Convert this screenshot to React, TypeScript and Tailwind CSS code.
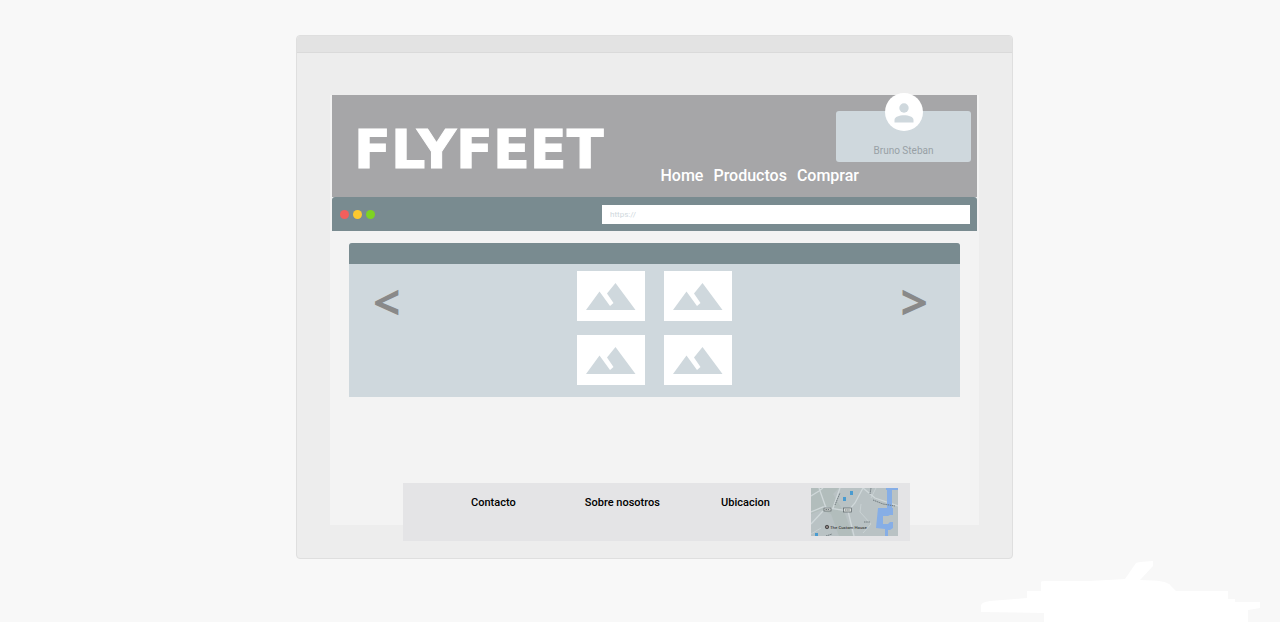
import React from "react";

function MountainIcon() {
  return (
    <svg viewBox="0 0 68 50" className="h-[50px] w-[68px]" fill="#cfd8dd" aria-hidden="true">
      <path d="M9 39 22.500 20.500 33 35 36.500 32 30 22.500 38.500 12 58.500 39Z" />
    </svg>
  );
}

function Picture() {
  return (
    <div className="bg-white">
      <MountainIcon />
    </div>
  );
}

function CityMap() {
  return (
    <svg viewBox="0 0 87 48" className="h-12 w-[87px]" role="img" aria-label="Mapa">
      <rect width="87" height="48" fill="#b9c2c4" />
      <path d="M28 0 22 6 34 26 42 48 28 48 20 26 10 22 0 26V0Z" fill="#b2bdbc" />
      <g fill="none" stroke="#d0d8da" strokeWidth="1.300">
        <path d="M0 24 12 19 37 23 44 15 52 0M8 0 15 20M0 8 8 3 12 0M29 0 22 20M37 23 43 48M0 36 12 23M52 0 64 10 87 18" />
        <path d="M50 16 49 24 60 36 52 45M65 0 60 10M0 46 10 40" strokeWidth="0.700" />
      </g>
      <path d="M75 0H87V2H81V20H82V27H79L77 28H72V36H77L79 34H82V40L79 42H77V48H74V41L65 40 67 20H76V2H75Z" fill="#86aee6" />
      <g fill="#4a9bd0">
        <rect x="39" y="3" width="3" height="4" />
        <rect x="32" y="9" width="3" height="4" />
        <rect x="4" y="45" width="3" height="3" />
      </g>
      <g fill="#d8dcd9" stroke="#596266" strokeWidth="0.700">
        <rect x="13" y="20" width="7" height="3" />
        <rect x="32.500" y="20" width="8" height="4" />
      </g>
      <path d="M14.500 21.500h4M34 22h5M24 17 29 5M59 6l1-6M62 12l10 4 12 2M53 34h6M15 48l6-2" fill="none" stroke="#707a7e" strokeWidth="1" strokeDasharray="1.500 0.700" />
      <circle cx="16" cy="39" r="1.700" fill="#8b8080" stroke="#4b4b4b" strokeWidth="1" />
      <text x="19" y="40.500" fontSize="4.300" fill="#444" fontFamily="Roboto, sans-serif">The Custom House</text>
    </svg>
  );
}

function Header() {
  return (
    <header className="flex h-[102px] justify-between bg-[#a6a6a8] pl-[22px] pr-1.5">
      <h1 className="pt-6 font-['DejaVu_Sans',sans-serif] text-[54px] leading-[62px] font-bold text-white [-webkit-text-stroke:1px_#fff]">FLYFEET</h1>
      <div className="relative flex flex-col items-end pt-4">
        <div className="relative flex h-[51px] w-[135px] items-end justify-center rounded-[3px] bg-[#cfd8dd] pb-1 text-[10px] leading-[14px] text-[#98a0a5]">
          <svg viewBox="0 0 38 38" className="absolute -top-[18px] left-[49px] h-[38px] w-[38px]" aria-hidden="true">
            <circle cx="19" cy="19" r="19" fill="#fff" />
            <circle cx="19" cy="15" r="4.700" fill="#cfd8dd" />
            <path d="M9.500 29.500V27C9.500 20.700 28.500 20.700 28.500 27v2.500Z" fill="#cfd8dd" />
          </svg>
          Bruno Steban
        </div>
        <nav className="mr-28 flex gap-2.5 text-[16px] leading-7 font-medium text-white">
          <a href="#home">Home</a>
          <a href="#productos">Productos</a>
          <a href="#comprar">Comprar</a>
        </nav>
      </div>
    </header>
  );
}

export default function App() {
  return (
    <div className="relative min-h-screen overflow-hidden bg-[#f8f8f8] pt-[35px] pl-[29px] font-[Roboto,sans-serif]">
      <div className="mx-auto w-full max-w-[717px] rounded border border-[#dfdfdf] bg-[#ededed] pb-[17px]">
        <div className="h-[17px] rounded-t border-b border-[#dadada] bg-[#e3e3e3]" />
        <main className="mx-[33px] mt-[42px] bg-[#f3f3f3] pb-32">
          <div className="mx-0.5">
            <Header />
            <div className="flex h-[34px] items-center justify-between rounded-t-[3px] bg-[#798b90] pr-[7px] pl-2">
              <div className="flex gap-1">
                <span className="h-[9px] w-[9px] rounded-full bg-[#f35f5c]" />
                <span className="h-[9px] w-[9px] rounded-full bg-[#fdc92f]" />
                <span className="h-[9px] w-[9px] rounded-full bg-[#7ed321]" />
              </div>
              <input
                type="text"
                aria-label="Dirección"
                placeholder="https://"
                className="h-[19px] w-[368px] bg-white px-2 text-[8px] placeholder:text-[#cfd8dd] outline-none"
              />
            </div>
          </div>
          <section className="mx-[19px] mt-3 overflow-hidden rounded-t-[3px] bg-[#cfd8dd]">
            <div className="h-[21px] bg-[#798b90]" />
            <div className="grid grid-cols-[1fr_auto_1fr] items-start pt-[7px] pr-8 pb-3 pl-6 text-[#898989]">
              <button type="button" aria-label="Anterior" className="justify-self-start pt-1.5 font-['Open_Sans',sans-serif] text-[48px] leading-[50px] font-bold">&lt;</button>
              <div className="ml-2 grid grid-cols-2 gap-x-[19px] gap-y-3.5">
                <Picture />
                <Picture />
                <Picture />
                <Picture />
              </div>
              <button type="button" aria-label="Siguiente" className="justify-self-end pt-1.5 font-['Open_Sans',sans-serif] text-[48px] leading-[50px] font-bold">&gt;</button>
            </div>
          </section>
        </main>
        <footer className="relative mr-[102px] ml-[106px] -mt-[42px] flex h-[58px] items-start justify-between bg-[#e4e4e6] pt-[5px] pr-3 pl-[68px] text-[11px] leading-[30px] font-medium text-black">
          <a href="#contacto">Contacto</a>
          <a href="#nosotros" className="ml-7">Sobre nosotros</a>
          <a href="#ubicacion" className="ml-5">Ubicacion</a>
          <CityMap />
        </footer>
      </div>
      <svg viewBox="0 0 280 62" className="absolute right-[20px] bottom-0 h-[62px] w-[280px]" fill="#fff" aria-hidden="true">
        <path d="M1 45Q2 42 10 41L47 38V31H61V22Q61 21 66 21H110L145 19 156 3Q157 2 173 1V6L160 20Q188 20 191 26L196 31H248V39H255V42H280V48L268 50V62H64V53L1 52Z" />
      </svg>
    </div>
  );
}
